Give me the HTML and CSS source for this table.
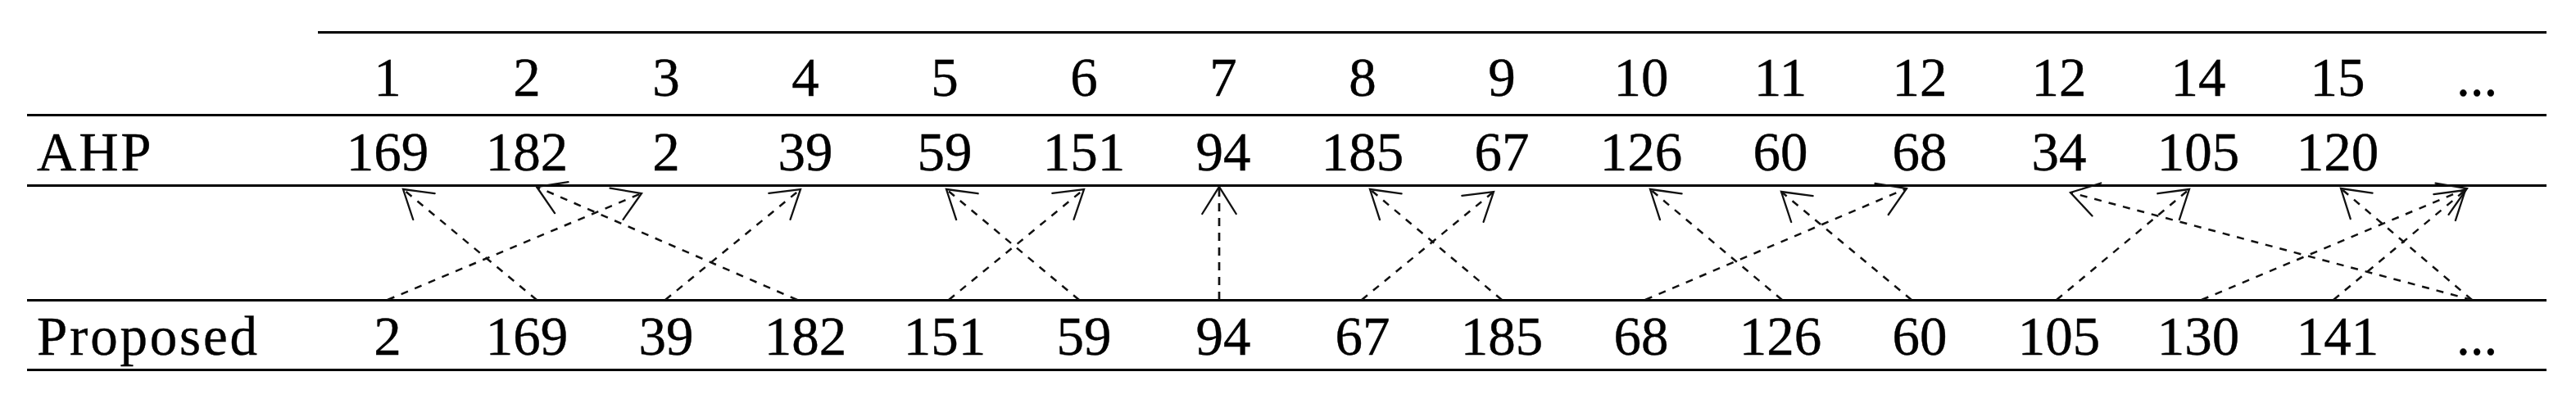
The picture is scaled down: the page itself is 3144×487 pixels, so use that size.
FILE: index.html
```html
<!DOCTYPE html>
<html>
<head>
<meta charset="utf-8">
<link rel="stylesheet" href="styles.css">
</head>
<body>
<div class="figure">
  <div class="table">
    <div class="rule rule-top"></div>
    <div class="row row-head">
      <div class="label"></div>
      <div class="cell">1</div><div class="cell">2</div><div class="cell">3</div><div class="cell">4</div>
      <div class="cell">5</div><div class="cell">6</div><div class="cell">7</div><div class="cell">8</div>
      <div class="cell">9</div><div class="cell">10</div><div class="cell">11</div><div class="cell">12</div>
      <div class="cell">12</div><div class="cell">14</div><div class="cell">15</div><div class="cell">...</div>
    </div>
    <div class="rule"></div>
    <div class="row row-ahp">
      <div class="label">AHP</div>
      <div class="cell">169</div><div class="cell">182</div><div class="cell">2</div><div class="cell">39</div>
      <div class="cell">59</div><div class="cell">151</div><div class="cell">94</div><div class="cell">185</div>
      <div class="cell">67</div><div class="cell">126</div><div class="cell">60</div><div class="cell">68</div>
      <div class="cell">34</div><div class="cell">105</div><div class="cell">120</div><div class="cell"></div>
    </div>
    <div class="rule"></div>
    <div class="gap"></div>
    <div class="rule"></div>
    <div class="row row-prop">
      <div class="label">Proposed</div>
      <div class="cell">2</div><div class="cell">169</div><div class="cell">39</div><div class="cell">182</div>
      <div class="cell">151</div><div class="cell">59</div><div class="cell">94</div><div class="cell">67</div>
      <div class="cell">185</div><div class="cell">68</div><div class="cell">126</div><div class="cell">60</div>
      <div class="cell">105</div><div class="cell">130</div><div class="cell">141</div><div class="cell">...</div>
    </div>
    <div class="rule"></div>
  </div>
  <svg class="arrows" width="3144" height="487" viewBox="0 0 3144 487">
    <defs>
      <marker id="ah" markerUnits="userSpaceOnUse" viewBox="-40 -25 44 50" refX="0" refY="0" markerWidth="44" markerHeight="50" orient="auto">
        <path class="head" d="M-33 -20.7 L0 0 L-33 20.7"/>
      </marker>
    </defs>
    <line class="arrow" x1="655" y1="366" x2="492" y2="231"/>
    <line class="arrow" x1="473" y1="366" x2="783" y2="236"/>
    <line class="arrow" x1="973" y1="366" x2="655" y2="228"/>
    <line class="arrow" x1="812" y1="366" x2="977" y2="231"/>
    <line class="arrow" x1="1158" y1="366" x2="1323" y2="231"/>
    <line class="arrow" x1="1317" y1="366" x2="1155" y2="231"/>
    <line class="arrow vert" x1="1488" y1="366" x2="1488" y2="228"/>
    <line class="arrow" x1="1662" y1="366" x2="1823" y2="234"/>
    <line class="arrow" x1="1833" y1="366" x2="1672" y2="231"/>
    <line class="arrow" x1="2175" y1="366" x2="2014" y2="231"/>
    <line class="arrow" x1="2333" y1="366" x2="2174" y2="234"/>
    <line class="arrow" x1="2008" y1="366" x2="2327" y2="230"/>
    <line class="arrow" x1="3017" y1="366" x2="2527" y2="235"/>
    <line class="arrow" x1="2510" y1="366" x2="2672" y2="231"/>
    <line class="arrow" x1="3017" y1="366" x2="2857" y2="230"/>
    <line class="arrow" x1="2687" y1="366" x2="3011" y2="230"/>
    <line class="arrow" x1="2848" y1="366" x2="3009" y2="232"/>
  </svg>
</div>
</body>
</html>
```

FILE: styles.css
```css
html, body {
  margin: 0;
  padding: 0;
  background: #ffffff;
}

.figure {
  position: relative;
  width: 3144px;
  height: 487px;
  overflow: hidden;
  font-family: "Liberation Serif", "Times New Roman", serif;
  font-size: 67px;
  line-height: 67px;
  color: #000000;
  -webkit-text-stroke: 0.4px #000000;
}

.table {
  display: flex;
  flex-direction: column;
  width: 3075px;
  padding: 38px 0 0 33px;
}

.rule {
  height: 3px;
  background: #000000;
}

.rule-top {
  margin-left: 355px;
}

.row {
  display: grid;
  grid-template-columns: 355px repeat(16, 170px);
  box-sizing: border-box;
}

.row-head {
  height: 98px;
  padding-top: 20px;
}

.row-ahp {
  height: 83px;
  padding-top: 10px;
}

.row-prop {
  height: 82px;
  padding-top: 9px;
}

.gap {
  height: 137px;
}

.label {
  padding-left: 12px;
  letter-spacing: 2.8px;
  white-space: nowrap;
}

.cell {
  text-align: center;
  white-space: nowrap;
}

.arrows {
  position: absolute;
  left: 0;
  top: 0;
}

.arrow {
  fill: none;
  stroke: #111111;
  stroke-width: 2.5;
  stroke-dasharray: 9 9;
  marker-end: url(#ah);
}

.arrow.vert {
  stroke-width: 2.7;
  stroke-dasharray: 10 8;
}

.head {
  fill: none;
  stroke: #111111;
  stroke-width: 2.3;
  stroke-dasharray: none;
  stroke-linecap: round;
  stroke-linejoin: miter;
}
```
